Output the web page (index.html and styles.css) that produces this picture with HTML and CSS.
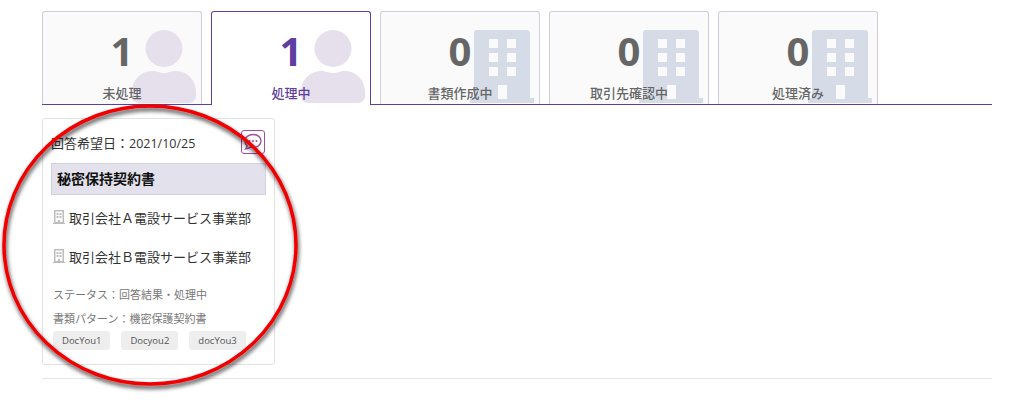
FILE: index.html
```html
<!DOCTYPE html>
<html>
<head>
    <meta charset="utf-8">
    <title>案件一覧</title>
    <link rel="stylesheet" href="styles.css">
</head>
<body>
    <div class="container">
        <div class="tabs">
            <div class="tab">
                <svg class="tab-icon icon-person" viewBox="0 0 64 74"><use href="#person"/></svg>
                <div class="tab-count">1</div>
                <div class="tab-label">未処理</div>
            </div>
            <div class="tab active">
                <svg class="tab-icon icon-person" viewBox="0 0 64 74"><use href="#person"/></svg>
                <div class="tab-count">1</div>
                <div class="tab-label">処理中</div>
            </div>
            <div class="tab">
                <svg class="tab-icon icon-building" viewBox="0 0 64 74"><use href="#building"/></svg>
                <div class="tab-count">0</div>
                <div class="tab-label">書類作成中</div>
            </div>
            <div class="tab">
                <svg class="tab-icon icon-building" viewBox="0 0 64 74"><use href="#building"/></svg>
                <div class="tab-count">0</div>
                <div class="tab-label">取引先確認中</div>
            </div>
            <div class="tab">
                <svg class="tab-icon icon-building" viewBox="0 0 64 74"><use href="#building"/></svg>
                <div class="tab-count">0</div>
                <div class="tab-label">処理済み</div>
            </div>
        </div>

        <div class="card-area">
            <div class="card">
                <div class="card-head">
                    <span>回答希望日：<span class="date">2021/10/25</span></span>
                    <button class="chat-btn">
                        <svg viewBox="0 0 20 20" width="20" height="20"><path d="M10 2.500c4.600 0 8 2.800 8 6.500s-3.400 6.500-8 6.500c-1 0-2-.1-2.800-.4-1.200 1-2.800 1.700-4.700 1.800.9-.9 1.500-2 1.700-3.200C2.900 12.600 2 10.900 2 9c0-3.700 3.400-6.500 8-6.500z"/><circle cx="6.500" cy="9" r="1"/><circle cx="10" cy="9" r="1"/><circle cx="13.500" cy="9" r="1"/></svg>
                    </button>
                </div>
                <div class="card-title">秘密保持契約書</div>
                <div class="company">
                    <svg class="company-icon" viewBox="0 0 12 14"><use href="#small-building"/></svg>
                    <span>取引会社Ａ電設サービス事業部</span>
                </div>
                <div class="company">
                    <svg class="company-icon" viewBox="0 0 12 14"><use href="#small-building"/></svg>
                    <span>取引会社Ｂ電設サービス事業部</span>
                </div>
                <div class="meta status">ステータス：回答結果・処理中</div>
                <div class="meta pattern">書類パターン：機密保護契約書</div>
                <div class="tags">
                    <span class="tag">DocYou1</span>
                    <span class="tag">Docyou2</span>
                    <span class="tag">docYou3</span>
                </div>
            </div>
        </div>
        <div class="bottom-line"></div>
    </div>

    <!-- hand drawn marker over the card -->
    <svg class="marker" width="320" height="300" viewBox="0 0 320 300">
        <defs>
            <filter id="marker-shadow" x="-10%" y="-10%" width="120%" height="120%">
                <feDropShadow dx="1" dy="3" stdDeviation="2" flood-color="#000" flood-opacity="0.75"/>
            </filter>
        </defs>
        <ellipse cx="150" cy="145" rx="146" ry="139" fill="none" stroke="#f00000" stroke-width="3.500" filter="url(#marker-shadow)"/>
    </svg>

    <svg class="defs" width="0" height="0">
        <symbol id="person" viewBox="0 0 64 74">
            <circle cx="32" cy="18.500" r="18.500"/>
            <path d="M0 62c0-12 9-21 20-21 5 0 7 2 12 2s7-2 12-2c11 0 20 9 20 21v4c0 4-3 7-7 7H7c-4 0-7-3-7-7z"/>
        </symbol>
        <symbol id="building" viewBox="0 0 64 74">
            <path fill-rule="evenodd" d="M4 3c0-1.700 1.300-3 3-3h50c1.700 0 3 1.300 3 3v65h4v5H0v-5h4zM19 9v9h9V9zM37 9v9h9V9zM19 23v9h9v-9zM37 23v9h9v-9zM19 37v9h9v-9zM37 37v9h9v-9zM28 55v14h9V55z"/>
        </symbol>
        <symbol id="small-building" viewBox="0 0 12 14">
            <path fill="#bdbdbd" fill-rule="evenodd" d="M1 0h10v13h1v1H0v-1h1zM2.500 1.500v10.500h2.500v-2h2v2h2.500V1.500zM3.500 3h2v2h-2zM6.500 3h2v2h-2zM3.500 6h2v2h-2zM6.500 6h2v2h-2z"/>
        </symbol>
    </svg>
</body>
</html>
```

FILE: styles.css
```css
body {
    font-family: "Open Sans", "Noto Sans CJK JP", sans-serif;
    margin: 0;
    background: white;
    color: #333;
}
.container {
    width: 950px;
    margin-left: 42px;
    padding-top: 11px;
}
.tabs {
    display: flex;
    align-items: flex-start;
    gap: 9px;
    height: 94px;
    box-sizing: border-box;
    border-bottom: 1px solid #5e3ea1;
}
.tab {
    position: relative;
    width: 160px;
    height: 93px;
    box-sizing: border-box;
    padding-top: 15px;
    text-align: center;
    background: #fafafa;
    border: 1px solid #d2ccdc;
    border-bottom: none;
    border-radius: 3px 3px 0 0;
    color: #666;
    overflow: hidden;
}
.tab.active {
    height: 94px;
    background: white;
    border: 1px solid #5e3ea1;
    border-bottom: none;
    color: #5e3ea1;
}
.tab-count {
    position: relative;
    font-size: 40px;
    font-weight: 700;
    line-height: 48px;
}
.tab-label {
    position: relative;
    margin-top: 9px;
    font-size: 13px;
    font-weight: 500;
    line-height: 18px;
}
.tab-icon {
    position: absolute;
    top: 18px;
    left: 89px;
    width: 64px;
    height: 74px;
}
.icon-person {
    fill: #e6e0ec;
}
.icon-building {
    fill: #d5dce8;
}
.card-area {
    padding-top: 13px;
}
.card {
    width: 233px;
    height: 247px;
    box-sizing: border-box;
    padding: 11px 8px 0;
    background: white;
    border: 1px solid #e2e2e2;
    border-radius: 3px;
}
.card-head {
    display: flex;
    justify-content: space-between;
    align-items: center;
    height: 24px;
    font-size: 13px;
    color: #333;
}
.date {
    font-size: 12.500px;
}
.chat-btn {
    display: flex;
    align-items: center;
    justify-content: center;
    width: 24px;
    height: 24px;
    margin-right: 1px;
    padding: 0;
    background: white;
    border: 1px solid #a04ea0;
    border-radius: 3px;
    fill: white;
    stroke: #a04ea0;
    stroke-width: 1.400;
}
.chat-btn circle {
    fill: #a04ea0;
    stroke: none;
}
.card-title {
    height: 32px;
    box-sizing: border-box;
    margin-top: 9px;
    padding-left: 5px;
    background: #e2e1ec;
    border: 1px solid #d0d3de;
    font-size: 14px;
    font-weight: 700;
    line-height: 30px;
    color: #111;
}
.company {
    display: flex;
    align-items: center;
    gap: 4px;
    height: 20px;
    margin-top: 12px;
    padding-left: 2px;
    font-size: 13px;
    color: #333;
}
.company + .company {
    margin-top: 19px;
}
.company-icon {
    width: 12px;
    height: 14px;
}
.meta {
    font-size: 11px;
    line-height: 16px;
    color: #777;
    padding-left: 2px;
}
.status {
    margin-top: 21px;
}
.pattern {
    margin-top: 8px;
}
.tags {
    display: flex;
    gap: 11px;
    margin-top: 4px;
    padding-left: 2px;
}
.tag {
    padding: 0 9px;
    height: 19px;
    line-height: 19px;
    font-size: 9.500px;
    background: #eee;
    border-radius: 3px;
    color: #555;
}
.bottom-line {
    margin-top: 13px;
    border-top: 1px solid #e6e6e6;
}
.marker {
    position: absolute;
    top: 100px;
    left: 0;
    pointer-events: none;
}
.defs {
    position: absolute;
}
```
